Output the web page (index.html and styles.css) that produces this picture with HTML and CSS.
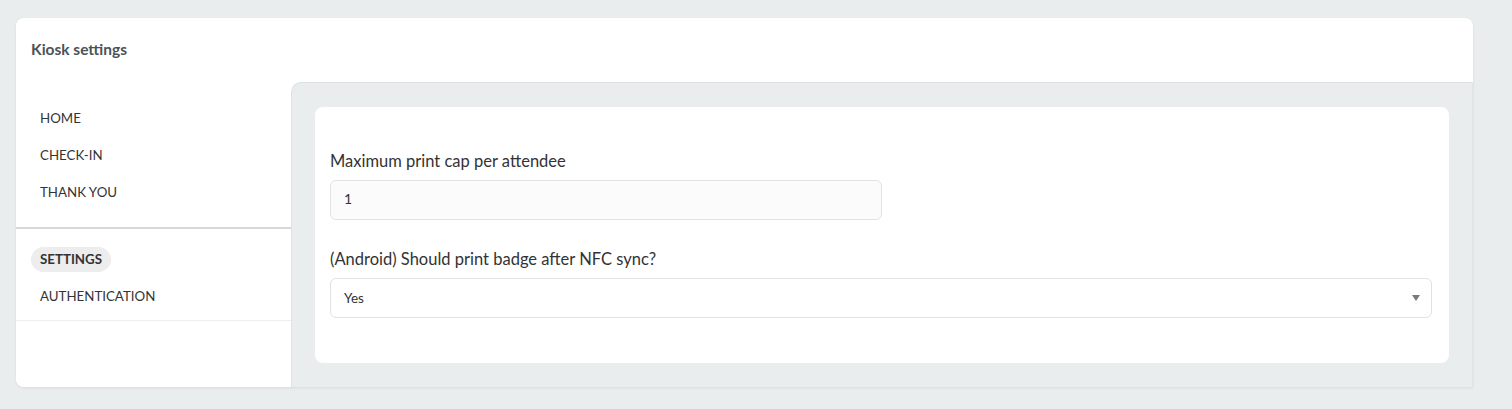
FILE: index.html
```html
<!DOCTYPE html>
<html>
<head>
    <link rel="stylesheet" href="styles.css">
</head>
<body>
    <!-- Kiosk settings card -->
    <div class="card">
        <div class="card-header">
            <h1>Kiosk settings</h1>
        </div>
        <div class="card-body">
            <!-- left menu -->
            <div class="sidebar">
                <ul class="nav-group">
                    <li><a class="nav-item">HOME</a></li>
                    <li><a class="nav-item">CHECK-IN</a></li>
                    <li><a class="nav-item">THANK YOU</a></li>
                </ul>
                <ul class="nav-group nav-group-last">
                    <li><a class="nav-item active">SETTINGS</a></li>
                    <li><a class="nav-item">AUTHENTICATION</a></li>
                </ul>
            </div>
            <!-- settings form -->
            <div class="panel">
                <div class="form-card">
                    <div class="field">
                        <label class="field-label">Maximum print cap per attendee</label>
                        <input type="text" class="text-input" value="1">
                    </div>
                    <div class="field">
                        <label class="field-label">(Android) Should print badge after NFC sync?</label>
                        <div class="select-box">
                            <span>Yes</span>
                            <svg class="select-arrow" width="8" height="6" viewBox="0 0 8 6"><path d="M0 0 L8 0 L4 6 Z" fill="#7a7a7a"/></svg>
                        </div>
                    </div>
                </div>
            </div>
        </div>
    </div>
</body>
</html>
```

FILE: styles.css
```css
body {
    margin: 0;
    padding: 18px 39px 22px 16px;
    background-color: #e9edee;
    font-family: Lato, "Liberation Sans", sans-serif;
    color: #333;
}

.card {
    background-color: #fff;
    border-radius: 8px 8px 0 8px;
    box-shadow: 0 1px 3px rgba(0, 0, 0, 0.08);
    overflow: hidden;
}

.card-header {
    height: 64px;
    display: flex;
    align-items: center;
    padding-left: 15px;
}

.card-header h1 {
    margin: 0;
    font-size: 15.5px;
    font-weight: 700;
    color: #4d5257;
    position: relative;
    top: -1px;
}

.card-body {
    display: flex;
}

/* left menu */
.sidebar {
    width: 275px;
    flex-shrink: 0;
    background-color: #fff;
}

.nav-group {
    list-style: none;
    margin: 0;
    padding: 18px 0 16px 0;
    border-bottom: 2px solid #d6d9db;
}

.nav-group-last {
    padding: 12px 0 5px 0;
    border-bottom: 1px solid #eeeeee;
}

.nav-group li {
    height: 37px;
    display: flex;
    align-items: center;
}

.nav-item {
    display: inline-block;
    margin-left: 15px;
    padding: 4px 9px;
    font-size: 13.3px;
    line-height: 17px;
    color: #333;
    border-radius: 13px;
    cursor: pointer;
}

.nav-item.active {
    background-color: #ededed;
    font-weight: 700;
}

/* right side */
.panel {
    flex: 1;
    background-color: #e9edee;
    border-top: 1px solid #dde1e3;
    border-left: 1px solid #dde1e3;
    border-right: 1px solid #e1e5e6;
    border-top-left-radius: 10px;
    padding: 24px 23px 24px 23px;
}

.form-card {
    background-color: #fff;
    border-radius: 8px;
    padding: 44px 17px 45px 15px;
}

.field + .field {
    margin-top: 29px;
}

.field-label {
    display: block;
    font-size: 16.5px;
    line-height: 20px;
    margin-bottom: 9px;
    color: #333;
}

.text-input {
    box-sizing: border-box;
    display: block;
    width: 552px;
    height: 40px;
    padding: 0 13px 3px 13px;
    font-family: Lato, "Liberation Sans", sans-serif;
    font-size: 14px;
    color: #333;
    background-color: #fbfbfb;
    border: 1px solid #e2e2e2;
    border-radius: 6px;
    outline: none;
}

.select-box {
    box-sizing: border-box;
    height: 40px;
    display: flex;
    align-items: center;
    justify-content: space-between;
    padding: 0 11px 1px 13px;
    font-size: 13.5px;
    background-color: #fff;
    border: 1px solid #e2e2e2;
    border-radius: 6px;
}

.select-arrow {
    display: block;
}
```
